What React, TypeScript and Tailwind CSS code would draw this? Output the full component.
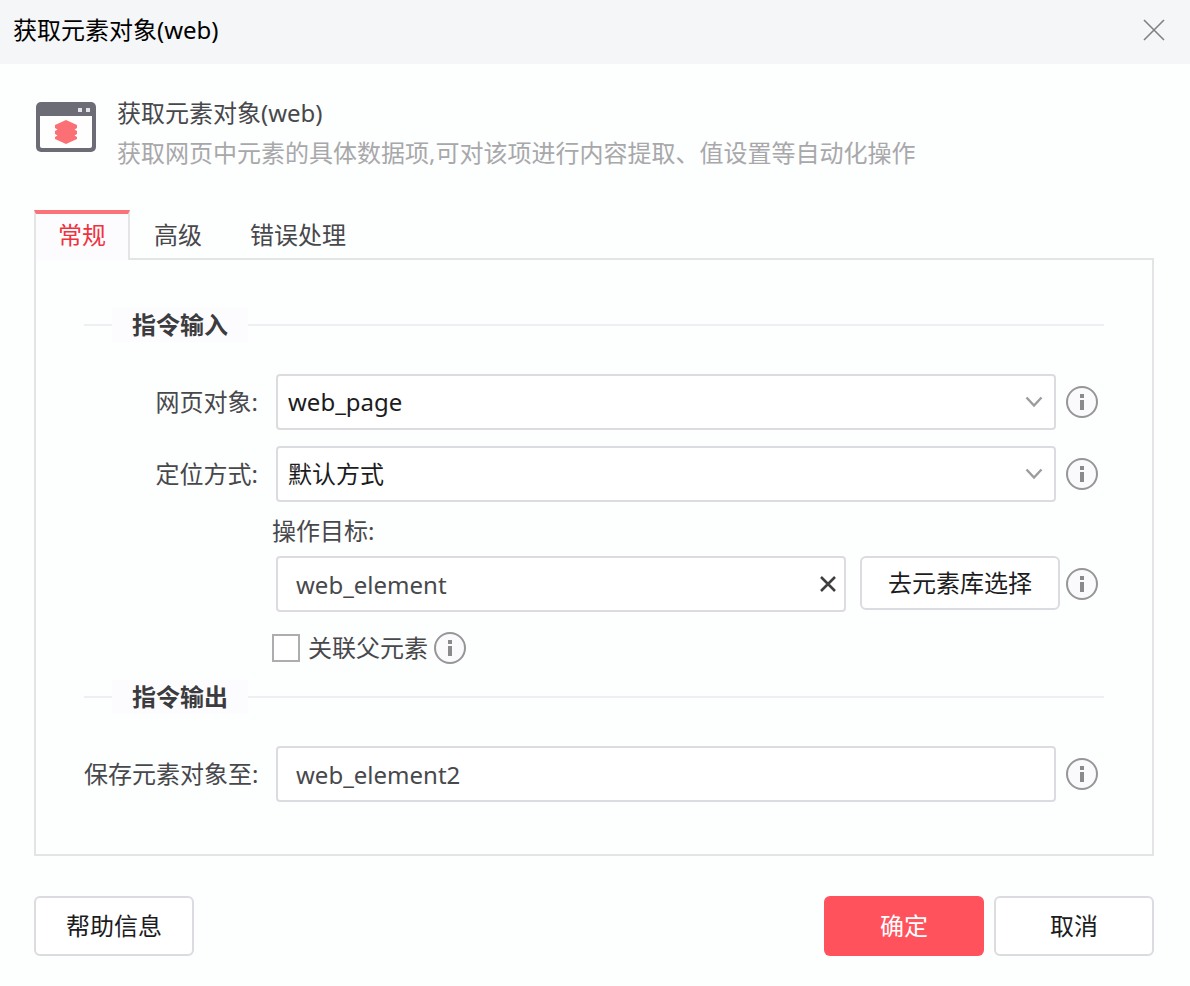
import { ReactNode, useState } from "react";

interface FieldRowProps {
    label: string;
    htmlFor: string;
    children: ReactNode;
}

interface SelectFieldProps {
    id: string;
    value: string;
    options: string[];
    onChange: (value: string) => void;
}

const tabs = ["常规", "高级", "错误处理"];

const InfoButton = ({ label }: { label: string }) => (
    <button type="button" aria-label={label} className="shrink-0 rounded-full">
        <svg width="32" height="32" viewBox="0 0 32 32" fill="none">
            <circle cx="16" cy="16" r="15" fill="#fafafd" stroke="#969698" strokeWidth="2" />
            <path d="M14 8h4v4h-4zM14 14h4v10h-4z" fill="#8a8a8c" />
        </svg>
    </button>
);

const WindowIcon = () => (
    <svg width="60" height="50" viewBox="0 0 60 50" fill="none" className="shrink-0">
        <rect width="60" height="50" rx="5" fill="#6c6c77" />
        <path d="M4 14h52v30a2 2 0 0 1-2 2H6a2 2 0 0 1-2-2z" fill="#fefefe" />
        <path d="M42 6h4v4h-4zM50 6h4v4h-4z" fill="#e4e4e8" />
        <path
            d="M30 18l11 5v3l-2.500 1.500 2.500 1.500v3l-2.500 1.500 2.500 1.500v2l-11 5-11-5v-2l2.500-1.500-2.500-1.500v-3l2.500-1.500-2.500-1.500v-3z"
            fill="#fb7074"
        />
    </svg>
);

const SectionTitle = ({ children }: { children: ReactNode }) => (
    <div className="flex items-center">
        <span className="h-[2px] w-7 bg-[#efeff3]" />
        <h2 className="bg-[#fcfcfe] px-5 font-bold leading-[34px] text-[#3c3c40]">{children}</h2>
        <span className="h-[2px] flex-1 bg-[#efeff3]" />
    </div>
);

const FieldRow = ({ label, htmlFor, children }: FieldRowProps) => (
    <div className="flex items-center gap-[18px]">
        <label htmlFor={htmlFor} className="w-[174px] shrink-0 whitespace-nowrap text-right">
            {label}
        </label>
        <div className="flex min-w-0 flex-1 items-center gap-[10px] pr-[6px]">{children}</div>
    </div>
);

const SelectField = ({ id, value, options, onChange }: SelectFieldProps) => (
    <div className="relative min-w-0 flex-1">
        <select
            id={id}
            value={value}
            onChange={e => onChange(e.target.value)}
            className="h-14 w-full appearance-none rounded-sm border-2 border-[#dcdce0] bg-white px-[10px] text-[#1c1c1e] outline-none focus:border-[#ff525c]"
        >
            {options.map(option => (
                <option key={option}>{option}</option>
            ))}
        </select>
        <svg
            className="pointer-events-none absolute right-[13px] top-[22px]"
            width="18"
            height="12"
            viewBox="0 0 18 12"
            fill="none"
        >
            <path d="M1.500 1.500L9 9.500l7.500-8" stroke="#9c9c9e" strokeWidth="2.400" />
        </svg>
    </div>
);

const App = () => {
    const [activeTab, setActiveTab] = useState(tabs[0]);
    const [page, setPage] = useState("web_page");
    const [locator, setLocator] = useState("默认方式");
    const [target, setTarget] = useState("web_element");
    const [linkParent, setLinkParent] = useState(false);
    const [output, setOutput] = useState("web_element2");

    return (
        <div className="min-h-screen bg-[#fdfefe] font-['Noto_Sans','Noto_Sans_CJK_SC',sans-serif] text-2xl text-[#48484c]">
            <header className="flex h-16 items-center justify-between bg-[#f5f6f8] pb-1 pl-[13px] pr-[25px]">
                <h1 className="text-black">获取元素对象(web)</h1>
                <button type="button" aria-label="关闭">
                    <svg width="22" height="22" viewBox="0 0 22 22" fill="none" stroke="#818184" strokeWidth="1.600">
                        <path d="M1 1l20 20M21 1L1 21" />
                    </svg>
                </button>
            </header>

            <main className="pb-[30px] pl-[34px] pr-9 pt-7">
                <div className="flex gap-[21px] pl-[2px]">
                    <div className="pt-[10px]">
                        <WindowIcon />
                    </div>
                    <div className="pt-px leading-10">
                        <p>获取元素对象(web)</p>
                        <p className="text-[#a8a8aa]">获取网页中元素的具体数据项,可对该项进行内容提取、值设置等自动化操作</p>
                    </div>
                </div>

                <div role="tablist" className="relative -mb-[2px] mt-[37px] flex">
                    {tabs.map(tab => (
                        <button
                            key={tab}
                            type="button"
                            role="tab"
                            aria-selected={tab === activeTab}
                            onClick={() => setActiveTab(tab)}
                            className={
                                tab === activeTab
                                    ? "h-[50px] border-x-2 border-t-4 border-x-[#e4e4e7] border-t-[#fb7377] bg-[#fcfcff] px-[22px] pb-1 text-[#f0323e]"
                                    : "h-[50px] border-t-4 border-t-transparent px-6 pb-1"
                            }
                        >
                            {tab}
                        </button>
                    ))}
                </div>

                <section className="border-2 border-[#e4e4e7] px-12 pb-[52px] pt-12">
                    <SectionTitle>指令输入</SectionTitle>

                    <div className="mt-8 flex flex-col gap-4">
                        <FieldRow label="网页对象:" htmlFor="page">
                            <SelectField id="page" value={page} options={["web_page"]} onChange={setPage} />
                            <InfoButton label="网页对象说明" />
                        </FieldRow>
                        <FieldRow label="定位方式:" htmlFor="locator">
                            <SelectField id="locator" value={locator} options={["默认方式"]} onChange={setLocator} />
                            <InfoButton label="定位方式说明" />
                        </FieldRow>
                    </div>

                    <div className="pl-[188px] pr-[6px]">
                        <label htmlFor="target" className="mb-[6px] mt-[10px] block leading-[38px]">
                            操作目标:
                        </label>
                        <div className="flex items-center gap-[6px] pl-1">
                            <div className="relative mr-2 min-w-0 flex-1">
                                <input
                                    id="target"
                                    type="text"
                                    value={target}
                                    onChange={e => setTarget(e.target.value)}
                                    className="h-14 w-full rounded-sm border-2 border-[#dcdce0] bg-white pl-[18px] pr-12 outline-none focus:border-[#ff525c]"
                                />
                                <button
                                    type="button"
                                    aria-label="清空"
                                    onClick={() => setTarget("")}
                                    className="absolute right-[10px] top-5"
                                >
                                    <svg width="16" height="16" viewBox="0 0 16 16" fill="none" stroke="#3f3f42" strokeWidth="2.600">
                                        <path d="M1 1l14 14M15 1L1 15" />
                                    </svg>
                                </button>
                            </div>
                            <button
                                type="button"
                                className="h-[54px] w-[200px] shrink-0 self-start whitespace-nowrap rounded-md border-2 border-[#dcdce0] bg-white text-[#1c1c1e]"
                            >
                                去元素库选择
                            </button>
                            <InfoButton label="操作目标说明" />
                        </div>
                        <div className="mt-5 flex h-8 items-center gap-[6px]">
                            <label className="flex items-center gap-2">
                                <input
                                    type="checkbox"
                                    checked={linkParent}
                                    onChange={e => setLinkParent(e.target.checked)}
                                    className="size-7 appearance-none border-2 border-[#adadb0] bg-white checked:bg-[#ff525c]"
                                />
                                关联父元素
                            </label>
                            <InfoButton label="关联父元素说明" />
                        </div>
                    </div>

                    <div className="mt-4">
                        <SectionTitle>指令输出</SectionTitle>
                    </div>

                    <div className="mt-8">
                        <FieldRow label="保存元素对象至:" htmlFor="output">
                            <input
                                id="output"
                                type="text"
                                value={output}
                                onChange={e => setOutput(e.target.value)}
                                className="h-14 min-w-0 flex-1 rounded-sm border-2 border-[#dcdce0] bg-white px-[18px] outline-none focus:border-[#ff525c]"
                            />
                            <InfoButton label="保存元素对象说明" />
                        </FieldRow>
                    </div>
                </section>

                <footer className="mt-10 flex gap-[10px]">
                    <button type="button" className="mr-auto h-[60px] w-40 rounded-md border-2 border-[#dcdce0] bg-white text-[#1c1c1e]">
                        帮助信息
                    </button>
                    <button type="button" className="h-[60px] w-40 rounded-md bg-[#ff525c] text-white">
                        确定
                    </button>
                    <button type="button" className="h-[60px] w-40 rounded-md border-2 border-[#dcdce0] bg-white text-[#1c1c1e]">
                        取消
                    </button>
                </footer>
            </main>
        </div>
    );
};

export default App;
